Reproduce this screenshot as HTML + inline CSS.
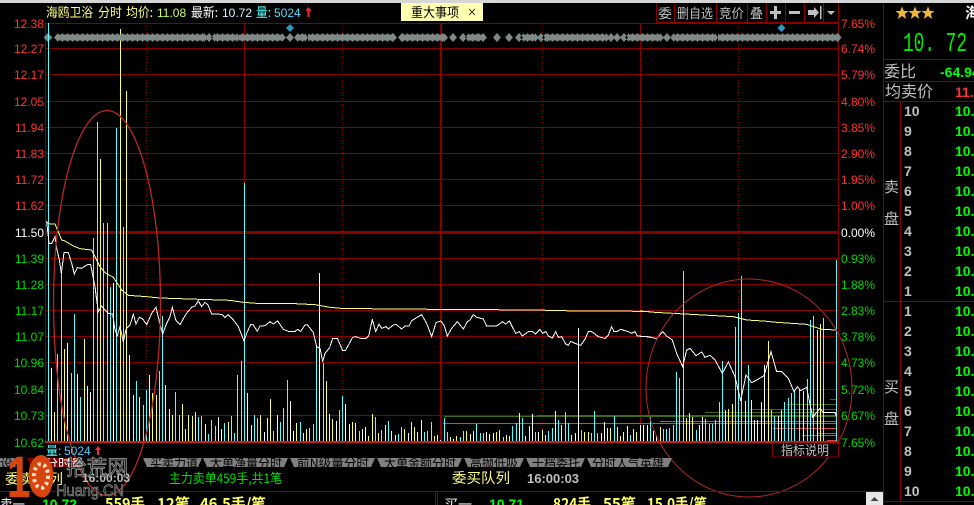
<!DOCTYPE html>
<html><head><meta charset="utf-8"><style>
html,body{margin:0;padding:0;background:#000;width:974px;height:505px;overflow:hidden}
svg{display:block;position:absolute;left:0;top:0}
text{font-family:"WenQuanYi Zen Hei","Noto Sans CJK SC",sans-serif;font-size:13px}
.n{font-family:"Liberation Sans",sans-serif;font-size:12px}
.r{fill:#ff3232}.g{fill:#00d800}
.b{font-family:"Liberation Sans",sans-serif;font-size:14px;font-weight:bold;fill:#c0c0c0}
.v{font-family:"Liberation Sans",sans-serif;font-size:14px;font-weight:bold;fill:#00ff00}
.t{fill:#000;font-size:13px}
.y{fill:#ffff66;font-weight:bold;font-size:15px}
</style></head><body>
<svg width="974" height="505" viewBox="0 0 974 505" xmlns="http://www.w3.org/2000/svg">
<defs>
<pattern id="d" patternUnits="userSpaceOnUse" x="0" y="33" width="5" height="9"><rect x="0" y="1.500" width="5" height="6" fill="#7f8a88"/><polygon points="0,3 2.500,0 5,3 5,6 2.500,9 0,6" fill="#7f8a88"/></pattern>
<clipPath id="tc"><rect x="0" y="458" width="700" height="9"/></clipPath>
<polygon id="s" points="0,-6.500 1.900,-2 6.500,-2 2.800,1 4.200,6 0,3 -4.200,6 -2.800,1 -6.500,-2 -1.900,-2" fill="#f2b53a"/>
</defs>
<rect x="0" y="0" width="974" height="3" fill="#d6d6d6"/>

<!-- grid -->
<g shape-rendering="crispEdges" stroke="#880000" fill="none">
<path d="M45 23.500H838M45 48.500H838M45 74.500H838M45 101.500H838M45 127.500H838M45 153.500H838M45 179.500H838M45 205.500H838M45 258.500H838M45 284.500H838M45 310.500H838M45 336.500H838M45 362.500H838M45 389.500H838M45 415.500H838"/>
<path d="M45 232.500H838" stroke-width="3"/>
<path d="M45.500 23V442M244.500 23V442M640.500 23V442M838.500 3V457"/>
<path d="M441 23V442" stroke-width="2"/>
<path d="M146.500 26V442M342.500 26V442M542.500 26V442M738.500 26V442" stroke-dasharray="1 2"/>
</g>

<!-- order lines -->
<g shape-rendering="crispEdges" fill="none">
<path stroke="#3f6a14" d="M830 399.500H837M787 404.500H837M750 409.500H837M705 412.500H837M537 415.500H837M444 416.500H837"/>
<path stroke="#e04040" d="M443 423.500H837M660 421.500H837M773 428.500H837M817 433.500H837M802 435.500H837M827 440.500H837"/>
</g>

<!-- volume bars -->
<g transform="translate(.5,0)" shape-rendering="crispEdges" fill="none">
<path stroke="#55ffff" d="M48 442V23M57 442V354M61 442V270M71 442V373M74 442V314M80 442V397M93 442V238M97 442V122M103 442V223M107 442V223M110 442V287M116 442V128M123 442V227M136 442V381M143 442V405M146 442V390M159 442V371M162 442V316M175 442V392M179 442V415M198 442V417M201 442V416M208 442V434M211 442V420M215 442V426M224 442V423M231 442V416M234 442V433M237 442V375M241 442V361M244 442V183M254 442V415M257 442V418M273 442V431M280 442V422M283 442V408M287 442V380M300 442V422M309 442V428M313 442V424M316 442V346M323 442V363M339 442V410M342 442V396M359 442V431M375 442V417M381 442V430M388 442V421M398 442V434M401 442V427M424 442V432M427 442V431M431 442V422M444 442V418M447 442V432M460 442V437M463 442V431M476 442V424M480 442V433M483 442V433M503 442V437M512 442V426M516 442V423M522 442V418M535 442V432M548 442V431M552 442V428M558 442V420M565 442V412M568 442V423M581 442V430M591 442V433M594 442V411M597 442V433M614 442V416M630 442V435M650 442V417M663 442V429M666 442V429M669 442V428M673 442V425M676 442V372M679 442V378M683 442V271M696 442V430M705 442V419M709 442V424M712 442V424M715 442V420M719 442V402M722 442V361M735 442V327M738 442V313M741 442V276M748 442V365M771 442V410M774 442V416M784 442V402M788 442V398M791 442V393M794 442V390M799 442V390M807 442V379M810 442V320M813 442V316M823 442V318M836 442V260"/>
<path stroke="#ffff66" d="M54 442V412M64 442V349M77 442V374M84 442V339M87 442V386M100 442V159M120 442V29M126 442V91M129 442V355M133 442V395M139 442V397M149 442V375M152 442V393M156 442V395M165 442V385M169 442V409M172 442V415M182 442V404M185 442V429M188 442V415M192 442V416M195 442V412M205 442V424M228 442V422M247 442V393M251 442V425M260 442V415M267 442V418M270 442V399M277 442V415M296 442V423M303 442V433M306 442V429M326 442V381M329 442V414M332 442V419M349 442V424M352 442V422M355 442V423M368 442V436M372 442V414M378 442V433M385 442V425M391 442V431M395 442V435M404 442V429M411 442V422M414 442V427M417 442V432M421 442V420M434 442V436M437 442V435M450 442V437M453 442V439M456 442V436M466 442V431M470 442V434M473 442V431M496 442V432M499 442V430M506 442V435M509 442V436M519 442V413M529 442V426M542 442V430M545 442V435M555 442V411M561 442V425M571 442V435M584 442V432M588 442V432M607 442V428M610 442V428M617 442V427M620 442V436M623 442V432M633 442V429M636 442V432M660 442V427M686 442V418M689 442V413M692 442V417M725 442V410M728 442V409M732 442V404M745 442V401M751 442V400M757 442V420M761 442V402M768 442V341M781 442V410M803 442V391M817 442V330M820 442V324"/>
<path stroke="#ffffff" d="M51 442V368M67 442V343M90 442V392M113 442V283M218 442V417M221 442V429M264 442V432M290 442V401M293 442V431M319 442V273M336 442V421M345 442V404M362 442V429M365 442V427M408 442V433M440 442V440M486 442V432M489 442V434M493 442V433M525 442V436M532 442V414M538 442V432M575 442V433M578 442V328M601 442V433M604 442V422M627 442V426M640 442V425M643 442V425M647 442V425M653 442V431M656 442V435M699 442V425M702 442V417M754 442V420M764 442V365M778 442V416"/>
</g>
<rect x="45" y="441" width="794" height="2" fill="#c81e1e" shape-rendering="crispEdges"/>

<!-- price + average lines -->
<g fill="none" shape-rendering="crispEdges">
<g transform="translate(0,170) scale(.33333)">
<polyline vector-effect="non-scaling-stroke" stroke="#ffff80" stroke-width="1" points="138,155 150,162 165,162 185,210 195,213 220,228 240,236 275,240 300,290 315,308 340,322 365,360 385,376 440,380 480,384 600,388 690,391 730,397 770,400 865,400 945,404 990,412"/>
<polyline vector-effect="non-scaling-stroke" stroke="#ffffff" stroke-width="1" points="140,155 145,200 147,220 155,220 165,200 170,235 178,270 184,310 192,248 205,248 215,280 223,312 232,293 245,295 262,284 272,284 280,325 285,350 290,390 295,425 305,408 315,420 325,430 338,432 345,480 352,497 360,470 370,515 378,478 390,465 400,433 408,462 418,442 428,447 440,464 455,430 468,412 478,455 488,492 500,460 510,440 517,412 528,452 540,464 558,432 575,412 585,408 595,392 605,410 615,397 624,405 635,432 665,433 675,442 685,434 700,450 715,470 732,513 740,490 752,463 760,465 772,484 780,468 795,467 810,455 820,462 833,453 850,478 865,484 885,484 893,478 902,484 915,465 922,464 940,488 950,530 960,535 968,575 975,550 990,532"/>
</g>
<g transform="translate(330,220) scale(.33333)">
<polyline vector-effect="non-scaling-stroke" stroke="#ffff80" stroke-width="1" points="0,262 33,265 180,267 612,270 740,273 960,274"/>
<polyline vector-effect="non-scaling-stroke" stroke="#ffffff" stroke-width="1" points="0,380 8,355 22,355 38,392 46,392 68,352 78,350 92,355 108,355 116,348 127,298 137,335 147,312 155,325 168,320 175,327 190,315 198,313 215,327 225,318 237,318 245,302 275,284 290,310 305,350 318,308 332,303 342,315 352,348 365,325 382,305 400,327 412,305 420,300 430,284 440,292 460,297 470,318 500,318 518,305 527,312 538,303 557,340 568,335 577,348 595,335 608,335 617,342 630,328 638,340 648,335 655,348 667,354 677,335 685,352 695,350 707,372 715,376 722,364 735,370 752,376 765,358 775,335 785,335 805,350 825,355 835,345 845,320 852,335 860,335 872,328 895,335 905,340 915,335 922,348 950,350 960,352"/>
</g>
<g transform="translate(640,270) scale(.33333)">
<polyline vector-effect="non-scaling-stroke" stroke="#ffff80" stroke-width="1" points="0,123 45,127 135,132 280,140 320,150 370,153 410,157 500,163 545,178 590,180"/>
<polyline vector-effect="non-scaling-stroke" stroke="#ffffff" stroke-width="1" points="0,200 25,200 50,206 68,185 80,198 97,210 110,250 128,290 140,240 150,235 168,257 185,246 195,262 210,256 225,270 247,310 265,276 285,320 302,392 318,315 335,338 350,330 372,317 393,245 410,305 425,305 445,325 462,365 472,350 482,362 500,352 518,442 540,415 550,428 585,428 590,440"/>
</g>
</g>

<!-- event diamonds -->
<g fill="url(#d)" shape-rendering="crispEdges">
<rect x="58" y="33" width="146" height="9"/><rect x="215" y="33" width="22" height="9"/><rect x="239" y="33" width="43" height="9"/><rect x="298" y="33" width="7" height="9"/><rect x="308" y="33" width="85" height="9"/><rect x="402" y="33" width="42" height="9"/><rect x="469" y="33" width="10" height="9"/><rect x="524" y="33" width="11" height="9"/><rect x="546" y="33" width="60" height="9"/><rect x="629" y="33" width="31" height="9"/><rect x="674" y="33" width="41" height="9"/><rect x="718" y="33" width="120" height="9"/>
</g>
<path fill="#7f8a88" d="M48 33l4.500 4.500-4.500 4.500-4.500-4.500zM209 33l4 4.500-4 4.500-4-4.500zM290 33l4 4.500-4 4.500-4-4.500zM453 33l4 4.500-4 4.500-4-4.500zM463 33l4 4.500-4 4.500-4-4.500zM483 33l4 4.500-4 4.500-4-4.500zM497 33l4 4.500-4 4.500-4-4.500zM509 33l4 4.500-4 4.500-4-4.500zM519 33l4 4.500-4 4.500-4-4.500zM541 33l4 4.500-4 4.500-4-4.500zM611 33l4 4.500-4 4.500-4-4.500zM617 33l4 4.500-4 4.500-4-4.500zM624 33l4 4.500-4 4.500-4-4.500zM667 33l4 4.500-4 4.500-4-4.500zM838 33l3.500 4.500-3.500 4.500-4-4.500zM58 33l-4 4.500 4 4.500zM204 33l4 4.500-4 4.500zM215 33l-4 4.500 4 4.500zM237 33l3 4.500-3 4.500zM282 33l4 4.500-4 4.500zM298 33l-4 4.500 4 4.500zM305 33l3 4.500-3 4.500zM393 33l4 4.500-4 4.500zM402 33l-4 4.500 4 4.500zM444 33l4 4.500-4 4.500zM469 33l-4 4.500 4 4.500zM479 33l4 4.500-4 4.500zM524 33l-4 4.500 4 4.500zM535 33l4 4.500-4 4.500zM546 33l-4 4.500 4 4.500zM606 33l4 4.500-4 4.500zM629 33l-4 4.500 4 4.500zM660 33l4 4.500-4 4.500zM674 33l-4 4.500 4 4.500zM715 33l3 4.500-3 4.500z"/>
<rect x="48" y="23" width="1" height="20" fill="#55ffff" shape-rendering="crispEdges"/>
<path fill="#2e9ac4" d="M290 24l4 4-4 4-4-4zM781.500 24l4 4-4 4-4-4z"/>

<!-- ellipses -->
<g fill="none" stroke="#b82828">
<ellipse cx="107" cy="303" rx="53.500" ry="192.500" stroke-width="1.300"/>
<ellipse cx="749" cy="388" rx="103" ry="109" stroke-width="1"/>
</g>

<!-- left axis -->
<g text-anchor="end">
<text class="n r" x="44" y="28">12.38</text><text class="n r" x="44" y="53">12.27</text><text class="n r" x="44" y="79">12.17</text><text class="n r" x="44" y="106">12.05</text><text class="n r" x="44" y="132">11.94</text><text class="n r" x="44" y="158">11.83</text><text class="n r" x="44" y="184">11.72</text><text class="n r" x="44" y="210">11.62</text>
<text class="n" fill="#fff" x="44" y="237">11.50</text>
<text class="n g" x="44" y="263">11.39</text><text class="n g" x="44" y="289">11.28</text><text class="n g" x="44" y="315">11.17</text><text class="n g" x="44" y="341">11.07</text><text class="n g" x="44" y="367">10.96</text><text class="n g" x="44" y="394">10.84</text><text class="n g" x="44" y="420">10.73</text><text class="n g" x="44" y="447">10.62</text>
</g>
<!-- right axis -->
<g>
<text class="n r" x="841" y="28">7.65%</text><text class="n r" x="841" y="53">6.74%</text><text class="n r" x="841" y="79">5.79%</text><text class="n r" x="841" y="106">4.80%</text><text class="n r" x="841" y="132">3.85%</text><text class="n r" x="841" y="158">2.90%</text><text class="n r" x="841" y="184">1.95%</text><text class="n r" x="841" y="210">1.00%</text>
<text class="n" fill="#fff" x="841" y="237">0.00%</text>
<text class="n g" x="841" y="263">0.93%</text><text class="n g" x="841" y="289">1.88%</text><text class="n g" x="841" y="315">2.83%</text><text class="n g" x="841" y="341">3.78%</text><text class="n g" x="841" y="367">4.73%</text><text class="n g" x="841" y="394">5.72%</text><text class="n g" x="841" y="420">6.67%</text><text class="n g" x="841" y="447">7.65%</text>
</g>

<!-- title -->
<text x="46" y="17" fill="#ffff80" textLength="47" lengthAdjust="spacingAndGlyphs">海鸥卫浴</text>
<text x="98" y="17" fill="#ffff80" textLength="24" lengthAdjust="spacingAndGlyphs">分时</text>
<text x="126" y="17" fill="#ffff80" textLength="27" lengthAdjust="spacingAndGlyphs">均价:</text>
<text class="n" x="157" y="17" fill="#c8ff70">11.08</text>
<text x="191" y="17" fill="#fff" textLength="27" lengthAdjust="spacingAndGlyphs">最新:</text>
<text class="n" x="222" y="17" fill="#d8f0ff">10.72</text>
<text x="256" y="17" fill="#55ffff" textLength="15" lengthAdjust="spacingAndGlyphs">量:</text>
<text class="n" x="274" y="17" fill="#55ddff">5024</text>
<path fill="#f03030" d="M308.500 7l3 4h-2v6h-2v-6h-2z"/>

<!-- yellow tag -->
<rect x="401" y="3" width="82" height="18" fill="#ffffb0"/>
<text x="411" y="17" fill="#000" textLength="48" lengthAdjust="spacingAndGlyphs">重大事项</text>
<path d="M469 9l6 6M475 9l-6 6" stroke="#333" fill="none"/>

<!-- toolbar -->
<g shape-rendering="crispEdges" fill="none" stroke="#880000">
<path d="M656.500 3V22.500H838M674.500 3V22M716.500 3V22M747.500 3V22M766.500 3V22M785.500 3V22M804.500 3V22M823.500 3V22"/>
</g>
<g fill="#c0c0c0">
<text x="658" y="18" fill="#c0c0c0" textLength="14" lengthAdjust="spacingAndGlyphs">委</text>
<text x="677" y="18" fill="#c0c0c0" textLength="36" lengthAdjust="spacingAndGlyphs">删自选</text>
<text x="719" y="18" fill="#c0c0c0" textLength="25" lengthAdjust="spacingAndGlyphs">竞价</text>
<text x="750" y="18" fill="#c0c0c0" textLength="13" lengthAdjust="spacingAndGlyphs">叠</text>
<path d="M770 11h4v-5h3v5h4v3h-4v5h-3v-5h-4zM789 11h11v3h-11zM808 10h6v-3l5 5.500-5 5.500v-3h-6zM820 6h1.500v13H820zM827 11h8l-4 4z"/>
</g>

<!-- 指标说明 -->
<rect x="772.500" y="443" width="66" height="14" fill="#000" stroke="#880000" shape-rendering="crispEdges"/>
<text x="781" y="455" fill="#c0c0c0" textLength="48" lengthAdjust="spacingAndGlyphs">指标说明</text>
<text class="n" x="46" y="455" fill="#55ffff">量:</text>
<text class="n" x="64" y="455" fill="#55ccff">5024</text>
<path fill="#f03030" d="M98 446l3 4h-2v5h-2v-5h-2z"/>

<!-- tabs -->
<g shape-rendering="crispEdges">
<path fill="#808080" d="M0 458H21V467H0zM143 458H202L198 467H147zM203 458H288L284 467H207zM290 458H375L371 467H294zM377 458H462L458 467H381zM464 458H524L520 467H468zM526 458H585L581 467H530zM587 458H672L668 467H591z"/>
<path fill="#800000" d="M27 458H80L76 467H31z"/>
</g>
<g clip-path="url(#tc)">
<text class="t" x="0" y="468">设置</text>
<text x="45" y="468" fill="#fff" style="font-size:13px">分时量</text>
<text class="t" x="150" y="468" textLength="48" lengthAdjust="spacingAndGlyphs">买卖力道</text>
<text class="t" x="210" y="468" textLength="72" lengthAdjust="spacingAndGlyphs">大单净量分时</text>
<text class="t" x="297" y="468" textLength="72" lengthAdjust="spacingAndGlyphs">前N级量分时</text>
<text class="t" x="384" y="468" textLength="72" lengthAdjust="spacingAndGlyphs">大单金额分时</text>
<text class="t" x="470" y="468" textLength="48" lengthAdjust="spacingAndGlyphs">高抛低吸</text>
<text class="t" x="532" y="468" textLength="48" lengthAdjust="spacingAndGlyphs">十档委托</text>
<text class="t" x="592" y="468" textLength="72" lengthAdjust="spacingAndGlyphs">分时人气英雄</text>
</g>

<!-- bottom headers -->
<text x="5" y="484" fill="#ffff80" style="font-size:14px" textLength="58" lengthAdjust="spacingAndGlyphs">委卖队列</text>
<text class="n" x="82" y="482" fill="#c0c0c0" style="font-weight:bold">16:00:03</text>
<text x="169" y="483" fill="#00e000" textLength="113" lengthAdjust="spacingAndGlyphs">主力卖单459手,共1笔</text>
<text x="452" y="483" fill="#ffff80" style="font-size:14px" textLength="58" lengthAdjust="spacingAndGlyphs">委买队列</text>
<text class="n" x="527" y="483" fill="#c0c0c0" style="font-weight:bold;font-size:13px">16:00:03</text>

<!-- bottom table -->
<g shape-rendering="crispEdges" fill="none" stroke="#880000">
<path d="M0 491.500H883M435.500 491V505M437.500 491V505"/>
</g>
<text x="0" y="509" fill="#fff" textLength="25" lengthAdjust="spacingAndGlyphs">卖一</text>
<text class="v" x="42" y="509" style="font-size:14px">10.72</text>
<text class="y" x="105" y="509" textLength="40" lengthAdjust="spacingAndGlyphs">559手</text>
<text class="y" x="157" y="509" textLength="33" lengthAdjust="spacingAndGlyphs">12笔</text>
<text class="y" x="200" y="509" textLength="66" lengthAdjust="spacingAndGlyphs">46.5手/笔</text>
<text x="444" y="509" fill="#fff" textLength="28" lengthAdjust="spacingAndGlyphs">买一</text>
<text class="v" x="489" y="509" style="font-size:14px">10.71</text>
<text class="y" x="553" y="509" textLength="38" lengthAdjust="spacingAndGlyphs">824手</text>
<text class="y" x="603" y="509" textLength="33" lengthAdjust="spacingAndGlyphs">55笔</text>
<text class="y" x="647" y="509" textLength="60" lengthAdjust="spacingAndGlyphs">15.0手/笔</text>
<rect x="866" y="492" width="17" height="13" fill="#e6e6e6"/>
<path d="M874.500 497l4 4h-8z" fill="#444"/>

<!-- watermark -->
<g>
<ellipse cx="41" cy="476" rx="12.500" ry="21" fill="#d8440e"/>
<text x="7" y="497" style="font-family:'Liberation Sans',sans-serif;font-size:58px;font-weight:bold" fill="#d8440e" textLength="47" lengthAdjust="spacingAndGlyphs">10</text>
<ellipse cx="41" cy="476" rx="7" ry="12" fill="none" stroke="#ffe0c0" stroke-width="4" stroke-dasharray="3 3"/>
<circle cx="41" cy="476" r="3" fill="#d8440e"/>
<text x="66" y="475" style="font-size:21px" fill="#111" stroke="#a8a8a8" stroke-width=".7" textLength="62" lengthAdjust="spacingAndGlyphs">拾荒网</text>
<text x="56" y="496" style="font-family:'Liberation Sans',sans-serif;font-size:17px" fill="#222" stroke="#a0a0a0" stroke-width=".6" textLength="68" lengthAdjust="spacingAndGlyphs">Huang.CN</text>
</g>

<!-- right panel -->
<g shape-rendering="crispEdges" fill="none" stroke="#880000">
<path d="M883.500 3V505M883 59.500H974M883 81.500H974M883 101.500H974M900.500 101V501M883 301.500H974M883 501.500H974"/>
</g>
<use href="#s" x="902" y="13"/><use href="#s" x="915" y="13"/><use href="#s" x="928" y="13"/>
<text x="965" y="18" fill="#fff" style="font-size:15px;font-weight:bold">海</text>
<text x="903" y="51" style="font-family:'Liberation Mono',monospace;font-size:27px" fill="#00ee00" textLength="64" lengthAdjust="spacingAndGlyphs">10. 72</text>
<text x="884" y="77" fill="#c0c0c0" style="font-size:16px" textLength="32" lengthAdjust="spacingAndGlyphs">委比</text>
<text class="v" x="940" y="77">-64.94</text>
<text x="885" y="97" fill="#c0c0c0" style="font-size:16px" textLength="48" lengthAdjust="spacingAndGlyphs">均卖价</text>
<text x="955" y="97" class="n" style="font-weight:bold;font-size:14px" fill="#ff3232">11.</text>
<text x="884" y="192" fill="#c0c0c0" style="font-size:15px">卖</text><text x="884" y="224" fill="#c0c0c0" style="font-size:15px">盘</text>
<text x="884" y="392" fill="#c0c0c0" style="font-size:15px">买</text><text x="884" y="424" fill="#c0c0c0" style="font-size:15px">盘</text>
<g>
<text class="b" x="904" y="116">10</text><text class="b" x="904" y="136">9</text><text class="b" x="904" y="156">8</text><text class="b" x="904" y="176">7</text><text class="b" x="904" y="196">6</text><text class="b" x="904" y="216">5</text><text class="b" x="904" y="236">4</text><text class="b" x="904" y="256">3</text><text class="b" x="904" y="276">2</text><text class="b" x="904" y="296">1</text>
<text class="b" x="904" y="316">1</text><text class="b" x="904" y="336">2</text><text class="b" x="904" y="356">3</text><text class="b" x="904" y="376">4</text><text class="b" x="904" y="396">5</text><text class="b" x="904" y="416">6</text><text class="b" x="904" y="436">7</text><text class="b" x="904" y="456">8</text><text class="b" x="904" y="476">9</text><text class="b" x="904" y="496">10</text>
<text class="v" x="955" y="116">10.</text><text class="v" x="955" y="136">10.</text><text class="v" x="955" y="156">10.</text><text class="v" x="955" y="176">10.</text><text class="v" x="955" y="196">10.</text><text class="v" x="955" y="216">10.</text><text class="v" x="955" y="236">10.</text><text class="v" x="955" y="256">10.</text><text class="v" x="955" y="276">10.</text><text class="v" x="955" y="296">10.</text>
<text class="v" x="955" y="316">10.</text><text class="v" x="955" y="336">10.</text><text class="v" x="955" y="356">10.</text><text class="v" x="955" y="376">10.</text><text class="v" x="955" y="396">10.</text><text class="v" x="955" y="416">10.</text><text class="v" x="955" y="436">10.</text><text class="v" x="955" y="456">10.</text><text class="v" x="955" y="476">10.</text><text class="v" x="955" y="496">10.</text>
</g>
</svg>
</body></html>
